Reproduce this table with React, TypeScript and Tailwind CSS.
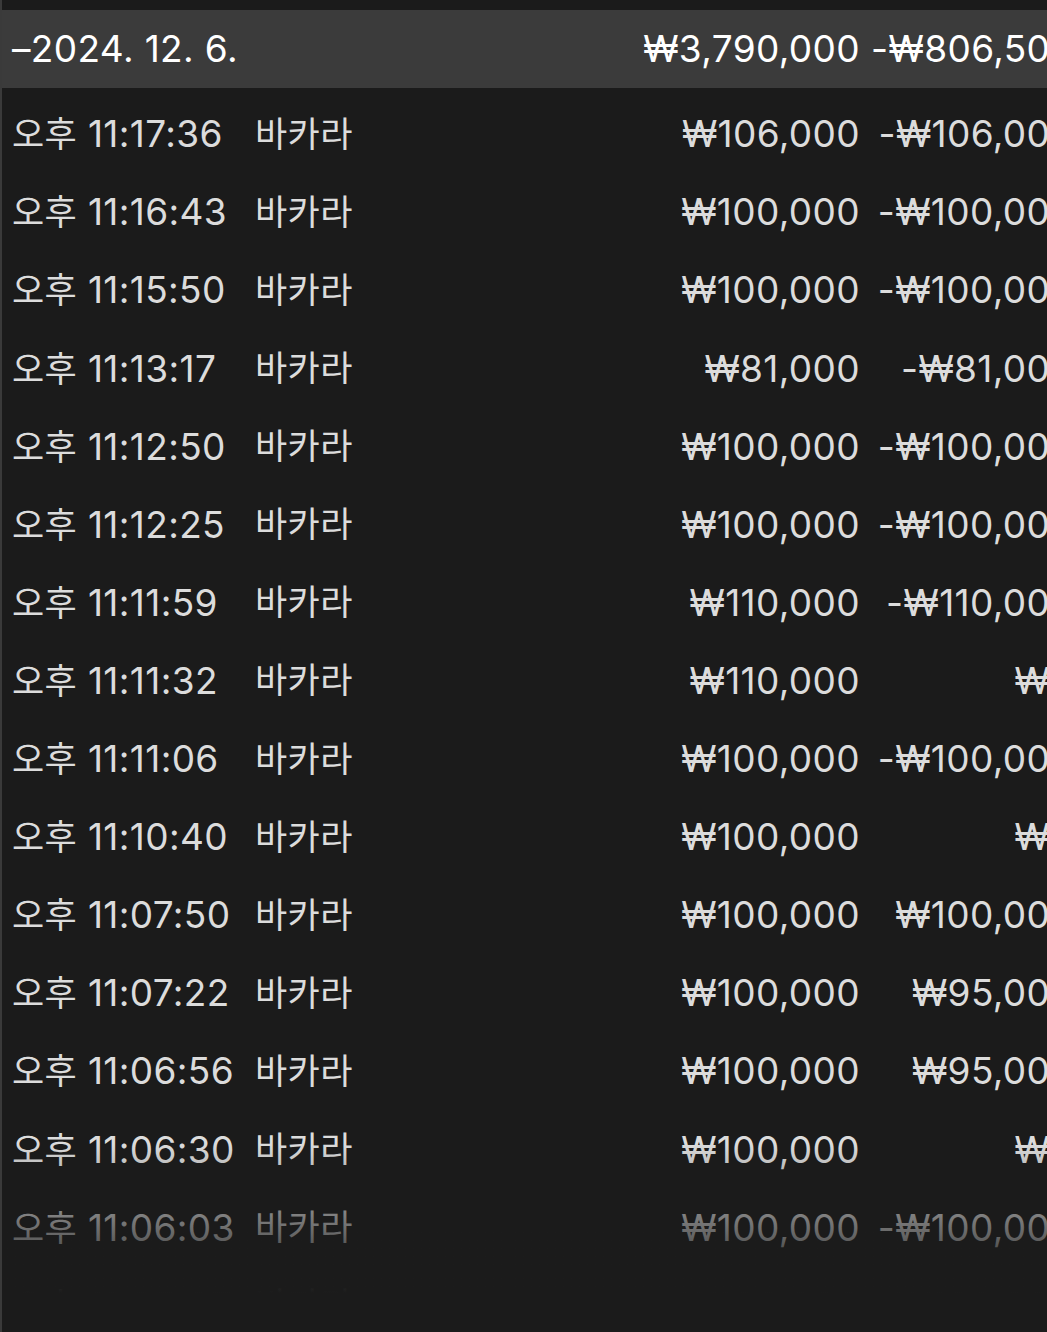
const font = { fontFamily: '"Inter", "Noto Sans CJK KR", sans-serif' };

type Row = { time: string; game: string; bet: string; result: string };

const rows: Row[] = [
  { time: "11:17:36", game: "바카라", bet: "₩106,000", result: "-₩106,000" },
  { time: "11:16:43", game: "바카라", bet: "₩100,000", result: "-₩100,000" },
  { time: "11:15:50", game: "바카라", bet: "₩100,000", result: "-₩100,000" },
  { time: "11:13:17", game: "바카라", bet: "₩81,000", result: "-₩81,000" },
  { time: "11:12:50", game: "바카라", bet: "₩100,000", result: "-₩100,000" },
  { time: "11:12:25", game: "바카라", bet: "₩100,000", result: "-₩100,000" },
  { time: "11:11:59", game: "바카라", bet: "₩110,000", result: "-₩110,000" },
  { time: "11:11:32", game: "바카라", bet: "₩110,000", result: "₩0" },
  { time: "11:11:06", game: "바카라", bet: "₩100,000", result: "-₩100,000" },
  { time: "11:10:40", game: "바카라", bet: "₩100,000", result: "₩0" },
  { time: "11:07:50", game: "바카라", bet: "₩100,000", result: "₩100,000" },
  { time: "11:07:22", game: "바카라", bet: "₩100,000", result: "₩95,000" },
  { time: "11:06:56", game: "바카라", bet: "₩100,000", result: "₩95,000" },
  { time: "11:06:30", game: "바카라", bet: "₩100,000", result: "₩0" },
  { time: "11:06:03", game: "바카라", bet: "₩100,000", result: "-₩100,000" },
  { time: "11:05:37", game: "바카라", bet: "₩100,000", result: "-₩100,000" },
];

function Line({ row }: { row: Row }) {
  return (
    <div className="flex h-[78.1px] w-[1080px] shrink-0 items-center pl-[10px] pr-[8px] text-[37px] tracking-[0.01em] text-[#dcdcdc]">
      <div className="w-[243px] whitespace-nowrap">
        <span className="text-[35px]">오후</span> {row.time}
      </div>
      <div className="flex-1 whitespace-nowrap text-[35px]">{row.game}</div>
      <div className="w-[200px] whitespace-nowrap text-right">{row.bet}</div>
      <div className="w-[214px] whitespace-nowrap text-right">{row.result}</div>
    </div>
  );
}

export default function App() {
  return (
    <main className="h-[1332px] w-[1047px] overflow-hidden border-l-2 border-[#3a3a3a] bg-[#1b1b1b]" style={font}>
      <div className="h-[10px]" />
      {/* 날짜 합계 */}
      <div className="flex h-[78px] w-[1080px] items-center bg-[#3b3b3b] pl-[10px] pr-[8px] text-[37px] tracking-[0.01em] text-white">
        <div className="flex-1 whitespace-nowrap">–2024. 12. 6.</div>
        <div className="w-[230px] whitespace-nowrap text-right">₩3,790,000</div>
        <div className="w-[214px] whitespace-nowrap text-right">-₩806,500</div>
      </div>

      {/* 내역 */}
      <div className="relative flex h-[1205px] flex-col overflow-hidden pt-[7px]">
        {rows.map((r, i) => (
          <Line key={i} row={r} />
        ))}
        <div className="pointer-events-none absolute inset-x-0 bottom-0 h-[150px] bg-gradient-to-b from-[#1b1b1b]/0 via-[#1b1b1b]/50 to-[#1b1b1b]" />
      </div>
    </main>
  );
}
